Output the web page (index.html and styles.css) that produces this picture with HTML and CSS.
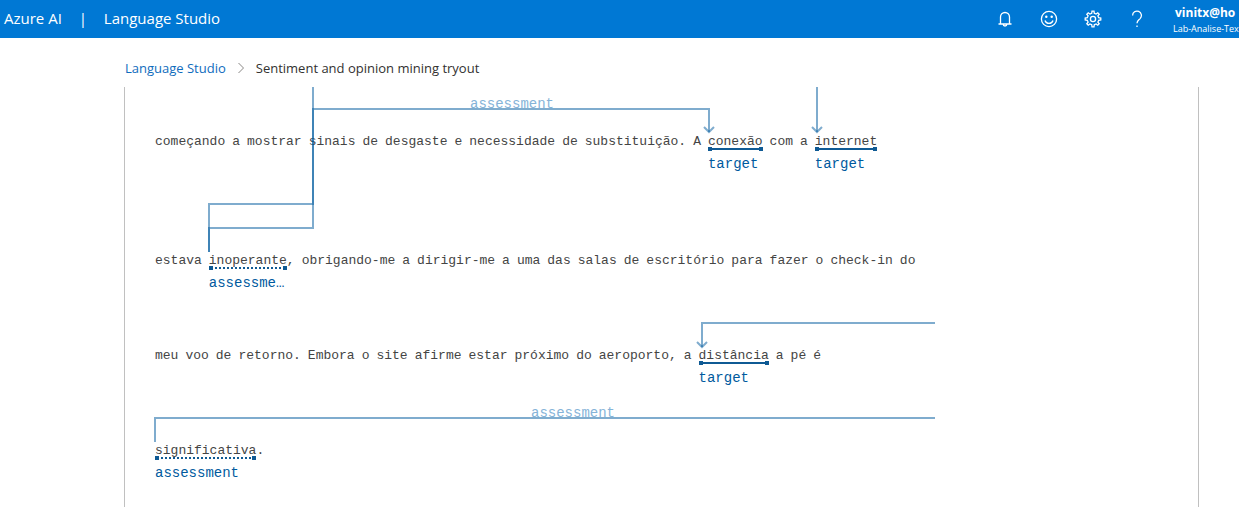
FILE: index.html
```html
<!DOCTYPE html>
<html lang="en">
<head>
<meta charset="utf-8">
<title>Language Studio - Sentiment and opinion mining tryout</title>
<link rel="stylesheet" href="styles.css">
</head>
<body>
<header class="topbar">
  <a class="brand" href="#">Azure AI</a>
  <span class="divider">|</span>
  <a class="brand" href="#">Language Studio</a>
  <div class="actions">
    <button class="icon-button" type="button" aria-label="Notifications">
      <svg width="18" height="18" viewBox="0 0 18 18" class="icon"><path d="M2.500 14H15.500M4.500 14V7a4.500 4.500 0 0 1 9 0v7M7.200 14.200a1.800 1.800 0 0 0 3.600 0"/></svg>
    </button>
    <button class="icon-button" type="button" aria-label="Feedback">
      <svg width="18" height="18" viewBox="0 0 18 18" class="icon"><circle cx="9" cy="9" r="7.600"/><path d="M5 10.500a4.200 4.200 0 0 0 8 0"/><circle cx="6.300" cy="6.700" r=".6"/><circle cx="11.700" cy="6.700" r=".6"/></svg>
    </button>
    <button class="icon-button" type="button" aria-label="Settings">
      <svg width="18" height="18" viewBox="0 0 18 18" class="icon"><path d="M7.700 3.300 8 1.200h2l.3 2.100 1.800.8 1.700-1.300 1.400 1.400-1.300 1.700.8 1.800 2.100.3v2l-2.100.3-.8 1.800 1.300 1.700-1.400 1.400-1.700-1.300-1.800.8-.3 2.100H8l-.3-2.100-1.800-.8-1.700 1.300-1.400-1.400 1.300-1.700-.8-1.800L1.200 10V8l2.100-.3.8-1.800-1.300-1.700 1.400-1.400 1.700 1.300z"/><circle cx="9" cy="9" r="2.600"/></svg>
    </button>
    <button class="icon-button" type="button" aria-label="Help">
      <svg width="18" height="18" viewBox="0 0 18 18" class="icon"><path d="M4.600 5.500a4.400 4.400 0 1 1 7.500 3.100C10.300 10.300 9 10.800 9 13.300M9 15.400v1.500"/></svg>
    </button>
  </div>
  <div class="account">
    <span class="account-name">vinitx@ho</span>
    <span class="account-resource">Lab-Analise-Tex</span>
  </div>
</header>

<nav class="breadcrumb" aria-label="Breadcrumb">
  <a href="#">Language Studio</a>
  <svg width="8" height="12" viewBox="0 0 8 12" class="chevron"><path d="M1.500 1 6.500 6l-5 5"/></svg>
  <span>Sentiment and opinion mining tryout</span>
</nav>

<main class="panel">
  <div class="annotated">
    <p class="line line-first"><span>começando</span><span>a</span><span>mostrar</span><span>sinais</span><span>de</span><span>desgaste</span><span>e</span><span>necessidade</span><span>de</span><span>substituição.</span><span>A</span><span class="entity target"><span class="word">conexão</span><span class="tag">target</span></span><span>com</span><span>a</span><span class="entity target"><span class="word">internet</span><span class="tag">target</span></span></p>
    <p class="line line-tall"><span>estava</span><span class="token"><span class="entity assessment"><span class="word">inoperante</span><span class="tag">assessme…</span></span>,</span><span>obrigando-me</span><span>a</span><span>dirigir-me</span><span>a</span><span>uma</span><span>das</span><span>salas</span><span>de</span><span>escritório</span><span>para</span><span>fazer</span><span>o</span><span>check-in</span><span>do</span></p>
    <p class="line"><span>meu</span><span>voo</span><span>de</span><span>retorno.</span><span>Embora</span><span>o</span><span>site</span><span>afirme</span><span>estar</span><span>próximo</span><span>do</span><span>aeroporto,</span><span>a</span><span class="entity target"><span class="word">distância</span><span class="tag">target</span></span><span>a</span><span>pé</span><span>é</span></p>
    <p class="line"><span class="token"><span class="entity assessment"><span class="word">significativa</span><span class="tag">assessment</span></span>.</span></p>

    <svg class="links" width="800" height="400" viewBox="0 0 800 400" aria-hidden="true">
      <path d="M158 0V117H54V165"/>
      <path d="M554 45V22H158V141H54V165"/>
      <path d="M549 40l5 5 5-5"/>
      <path d="M662 0V45"/>
      <path d="M657 40l5 5 5-5"/>
      <path d="M780 236H547V260"/>
      <path d="M542 255l5 5 5-5"/>
      <path d="M780 331H0V355"/>
    </svg>
    <span class="link-label label-upper">assessment</span>
    <span class="link-label label-lower">assessment</span>
  </div>
</main>
</body>
</html>
```
FILE: styles.css
```css
* { box-sizing: border-box; }

body {
  margin: 0;
  min-height: 100vh;
  display: flex;
  flex-direction: column;
  overflow: hidden;
  background: #fff;
  color: #323130;
  font-family: "Segoe UI", "Open Sans", "Noto Sans", sans-serif;
}

a { text-decoration: none; }

.topbar {
  display: flex;
  align-items: center;
  height: 38px;
  padding-left: 4px;
  background: #0078d4;
  color: #fff;
  font-size: 15px;
  line-height: 20px;
}

.brand,
.divider { padding-bottom: 2px; }
.brand { color: #fff; }
.divider { width: 42px; text-align: center; }
.actions { display: flex; margin-left: auto; }

.icon-button {
  display: flex;
  align-items: center;
  justify-content: center;
  width: 44px;
  height: 38px;
  padding: 0;
  border: 0;
  background: none;
  color: #fff;
}

.icon {
  fill: none;
  stroke: currentColor;
  stroke-width: 1.3;
}

.account {
  display: flex;
  flex-direction: column;
  width: 80px;
  padding: 3px 0 0 14px;
  overflow: hidden;
  white-space: nowrap;
}

.account-name {
  padding-left: 2px;
  font-size: 12px;
  font-weight: 700;
  line-height: 16px;
}

.account-resource {
  font-size: 9px;
  line-height: 16px;
}

.breadcrumb {
  display: flex;
  align-items: center;
  gap: 11px;
  height: 49px;
  padding: 10px 0 0 125px;
  font-size: 13px;
  line-height: 20px;
}

.breadcrumb a { color: #0f6cbd; }

.chevron {
  fill: none;
  stroke: #8a8886;
}

.panel {
  flex: 1;
  margin: 0 40px 0 124px;
  padding: 0 30px;
  border: solid #c0c0c0;
  border-width: 0 1px;
}

.annotated {
  position: relative;
  color: #444;
  font-family: Consolas, "Liberation Mono", monospace;
  font-size: 13px;
  line-height: 18px;
  white-space: nowrap;
}

.line {
  display: flex;
  gap: 7px;
  height: 40px;
  margin: 0;
  margin-top: 55px;
}

.line-first { margin-top: 0; padding-top: 46px; height: 86px; }
.line-tall { margin-top: 79px; }

.token { display: flex; }

.entity {
  display: flex;
  flex-direction: column;
  gap: 4px;
}

.word {
  height: 19px;
  background:
    linear-gradient(#0f5a94, #0f5a94) left bottom / 4px 4px no-repeat,
    linear-gradient(#0f5a94, #0f5a94) right bottom / 4px 4px no-repeat;
  position: relative;
}

.word::after {
  content: "";
  position: absolute;
  right: 4px;
  bottom: 1px;
  left: 4px;
  height: 2px;
  background: #0f5a94;
}

.assessment .word::after {
  background: repeating-linear-gradient(90deg, transparent 0 2px, #0f5a94 2px 4px);
}

.tag {
  width: 0;
  min-width: 100%;
  color: #005a9e;
  font-size: 14px;
}

.links {
  position: absolute;
  top: 0;
  left: 0;
  overflow: visible;
  fill: none;
  stroke: #005a9e;
  stroke-width: 2;
}

.links path { opacity: 0.5; }

.link-label {
  position: absolute;
  color: #85b3d8;
  font-size: 14px;
}

.label-upper { top: 8px; left: 315px; }
.label-lower { top: 317px; left: 376px; }
```
